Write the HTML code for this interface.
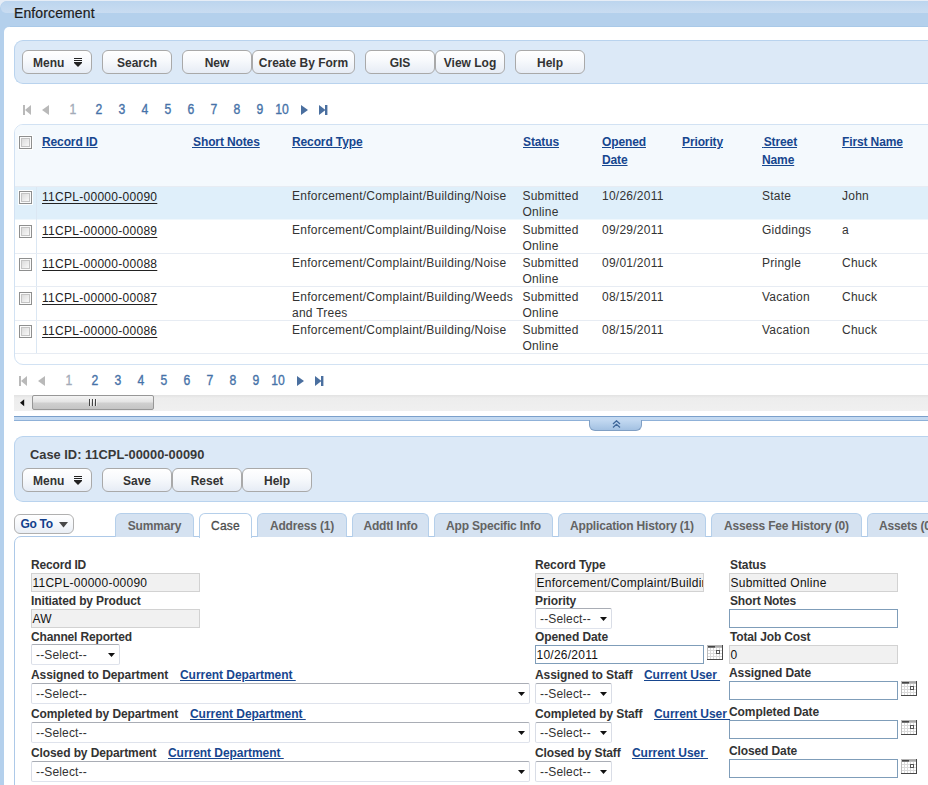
<!DOCTYPE html>
<html>
<head>
<meta charset="utf-8">
<title>Enforcement</title>
<style>
html,body{margin:0;padding:0;}
body{width:928px;height:785px;overflow:hidden;background:#fff;position:relative;font-family:"Liberation Sans",Arial,sans-serif;font-size:12px;color:#333;}
.abs{position:absolute;}
.t{position:absolute;white-space:nowrap;line-height:14px;}
#hdr{position:absolute;left:0;top:1px;width:940px;height:30px;background:linear-gradient(#b4d0ec 0,#b4d0ec 24.5px,#a9c9e8 25.5px,#a9c9e8 100%);border-top-left-radius:7px;overflow:hidden;}
#hdr .hi{position:absolute;left:1px;top:0;width:100%;height:11.5px;background:linear-gradient(#bcd5ee,#c9dcf1);border-radius:6px 0 0 5px;}
#side{position:absolute;left:0;top:20px;width:10px;height:770px;background:#b4d0ec;}
#main{position:absolute;left:4px;top:27px;width:940px;height:770px;background:#fff;border-top-left-radius:5px;}
.bar{position:absolute;background:#dce9f7;border:1px solid #b9d3ee;border-right:none;border-radius:9px 0 0 9px;box-sizing:border-box;}
.btn{position:absolute;box-sizing:border-box;height:24px;border:1px solid #a9a9a9;border-radius:6px;background:linear-gradient(#ffffff 0%,#f7f9fc 45%,#e6ecf5 100%);font-weight:bold;font-size:12px;color:#333;text-align:center;line-height:25px;white-space:nowrap;}
.pg{position:absolute;font-size:14px;color:#4672a8;line-height:14px;white-space:nowrap;transform:scaleX(0.87);-webkit-text-stroke:0.35px #4672a8;}
.pg.dis{color:#a3abb8;-webkit-text-stroke:0.35px #a3abb8;}
a,.lk{color:#17468f;text-decoration:underline;font-weight:bold;letter-spacing:-0.12px;}
.cb{position:absolute;width:13px;height:13px;box-sizing:border-box;border:1px solid #8e8f8f;background:#fbfbfb;box-shadow:0 0 0 1px rgba(255,255,255,0.9);}
.cb i{position:absolute;left:1px;top:1px;width:9px;height:9px;box-sizing:border-box;border:1px solid #c4c4c4;background:linear-gradient(135deg,#dcdcdc,#f8f8f8);}
.cell{position:absolute;font-size:12px;color:#333;line-height:16px;white-space:nowrap;letter-spacing:0.25px;}
.rid{text-underline-offset:2px;position:absolute;font-size:12px;color:#222;text-decoration:underline;line-height:16px;white-space:nowrap;letter-spacing:0.28px;}
.hl{position:absolute;height:1px;background:#e4ecf5;left:14px;width:920px;}
.lab{position:absolute;font-weight:bold;font-size:12px;color:#333;line-height:14px;white-space:nowrap;letter-spacing:-0.15px;}
.ro{position:absolute;box-sizing:border-box;height:19px;border:1px solid #d2d2d2;background:#f1f1f1;font-size:12px;color:#111;line-height:16px;padding:1px 0 0 0.5px;white-space:nowrap;overflow:hidden;letter-spacing:0.25px;}
.inp{position:absolute;box-sizing:border-box;height:19px;border:1px solid #7f9db9;background:#fff;font-size:12px;color:#111;line-height:16px;padding:1px 0 0 0.5px;white-space:nowrap;overflow:hidden;letter-spacing:0.25px;}
.sel{position:absolute;box-sizing:border-box;height:21px;border:1px solid;border-color:#a9adb5 #d9dde6 #dfe3ec #d9dde6;border-radius:2px;background:#fff;font-size:12px;color:#333;line-height:18px;padding:1px 0 0 4px;white-space:nowrap;letter-spacing:0.15px;}
.sel b{position:absolute;right:4px;top:8px;width:7px;height:4px;background:#111;clip-path:polygon(0 0,100% 0,50% 100%);}
.tab{position:absolute;top:513px;height:24px;box-sizing:border-box;border:1px solid #b5cfea;border-bottom:none;border-radius:6px 6px 0 0;background:#d5e2f1;font-weight:bold;font-size:12px;color:#636363;text-align:center;line-height:24px;white-space:nowrap;overflow:hidden;letter-spacing:-0.18px;}
.tab.on{background:#fff;color:#4c4c4c;font-weight:normal;-webkit-text-stroke:0.3px #4c4c4c;height:25px;letter-spacing:0.25px;}
.cal{position:absolute;width:16px;height:15px;}
</style>
</head>
<body>
<div class="abs" style="left:0;top:0;width:928px;height:8px;background:#e6edf6;"></div>
<div id="hdr"><div class="hi"></div></div>
<div id="side"></div>
<div id="main"></div>
<div class="t" style="left:14px;top:5px;font-size:14px;line-height:16px;color:#1c1c1c;-webkit-text-stroke:0.2px #1c1c1c;letter-spacing:0.12px;">Enforcement</div>

<!-- toolbar 1 -->
<div class="bar" style="left:14px;top:40px;width:920px;height:44px;"></div>
<div class="btn" style="left:22px;top:50px;width:70px;text-align:left;padding-left:10px;">Menu<svg style="position:absolute;left:50px;top:7px" width="10" height="9" viewBox="0 0 10 9"><path d="M1 0.5h8M1 2.5h8M1 4.5h8" stroke="#222" stroke-width="1"/><path d="M1 5h8L5 9z" fill="#222"/></svg></div>
<div class="btn" style="left:102px;top:50px;width:70px;">Search</div>
<div class="btn" style="left:182px;top:50px;width:70px;">New</div>
<div class="btn" style="left:252px;top:50px;width:103px;">Create By Form</div>
<div class="btn" style="left:365px;top:50px;width:70px;">GIS</div>
<div class="btn" style="left:435px;top:50px;width:70px;">View Log</div>
<div class="btn" style="left:515px;top:50px;width:70px;">Help</div>

<!-- pager 1 -->
<svg class="abs" style="left:23px;top:105px" width="9" height="10" viewBox="0 0 9 10"><rect x="0" y="0" width="2" height="10" fill="#b9b9b9"/><path d="M8 0v10L2 5z" fill="#b9b9b9"/></svg>
<svg class="abs" style="left:42px;top:105px" width="7" height="10" viewBox="0 0 7 10"><path d="M7 0v10L0 5z" fill="#b9b9b9"/></svg>
<div class="pg dis" style="left:58.3px;top:102px;width:30px;text-align:center;">1</div>
<div class="pg" style="left:83.6px;top:102px;width:30px;text-align:center;">2</div>
<div class="pg" style="left:106.8px;top:102px;width:30px;text-align:center;">3</div>
<div class="pg" style="left:129.9px;top:102px;width:30px;text-align:center;">4</div>
<div class="pg" style="left:153.0px;top:102px;width:30px;text-align:center;">5</div>
<div class="pg" style="left:176.0px;top:102px;width:30px;text-align:center;">6</div>
<div class="pg" style="left:199.0px;top:102px;width:30px;text-align:center;">7</div>
<div class="pg" style="left:221.5px;top:102px;width:30px;text-align:center;">8</div>
<div class="pg" style="left:244.5px;top:102px;width:30px;text-align:center;">9</div>
<div class="pg" style="left:267.2px;top:102px;width:30px;text-align:center;">10</div>
<svg class="abs" style="left:301px;top:105px" width="7" height="10" viewBox="0 0 7 10"><path d="M0 0v10L7 5z" fill="#4a6f9f"/></svg>
<svg class="abs" style="left:319px;top:105px" width="9" height="10" viewBox="0 0 9 10"><rect x="6" y="0" width="2.4" height="10" fill="#4a6f9f"/><path d="M0 0v10L6.5 5z" fill="#4a6f9f"/></svg>

<!-- table -->
<div class="abs" style="left:14px;top:124px;width:930px;height:241px;box-sizing:border-box;border:1px solid #d2e2f3;border-radius:9px 0 0 9px;background:#fff;overflow:hidden;">
<div class="abs" style="left:0;top:0;width:930px;height:61px;background:#f4f9fd;"></div>
<div class="abs" style="left:0;top:61px;width:930px;height:33px;background:#dfeffa;border-bottom:1px solid #eff7fc;"></div>
<div class="abs" style="left:21px;top:61px;width:1px;height:167px;background:#dbe7f3;"></div>
<div class="abs" style="left:0;top:61px;width:930px;height:1px;background:#e7ecf3;"></div>
<div class="abs" style="left:0;top:128px;width:930px;height:1px;background:#e7ecf3;"></div>
<div class="abs" style="left:0;top:161px;width:930px;height:1px;background:#e7ecf3;"></div>
<div class="abs" style="left:0;top:195px;width:930px;height:1px;background:#e7ecf3;"></div>
<div class="abs" style="left:0;top:228px;width:930px;height:1px;background:#e7ecf3;"></div>
</div>
<div class="abs lk" style="left:42px;top:133px;line-height:18px;white-space:nowrap;">Record ID</div>
<div class="abs lk" style="left:192px;top:133px;line-height:18px;white-space:nowrap;"><span style="white-space:pre;letter-spacing:-2.3px;"> </span>Short Notes</div>
<div class="abs lk" style="left:292px;top:133px;line-height:18px;white-space:nowrap;">Record Type</div>
<div class="abs lk" style="left:523px;top:133px;line-height:18px;white-space:nowrap;">Status</div>
<div class="abs lk" style="left:602px;top:133px;line-height:18px;white-space:nowrap;">Opened<br>Date</div>
<div class="abs lk" style="left:682px;top:133px;line-height:18px;white-space:nowrap;">Priority</div>
<div class="abs lk" style="left:762px;top:133px;line-height:18px;white-space:nowrap;"><span style="white-space:pre;letter-spacing:-1.6px;"> </span>Street<br>Name</div>
<div class="abs lk" style="left:842px;top:133px;line-height:18px;white-space:nowrap;">First Name</div>
<div class="cb" style="left:19px;top:136px;"><i></i></div>
<div class="cb" style="left:19px;top:191px;"><i></i></div>
<div class="rid" style="left:42px;top:189px;">11CPL-00000-00090</div>
<div class="cell" style="left:292px;top:188px;">Enforcement/Complaint/Building/Noise</div>
<div class="cell" style="left:522.4px;top:188px;">Submitted<br>Online</div>
<div class="cell" style="left:602px;top:188px;">10/26/2011</div>
<div class="cell" style="left:762px;top:188px;">State</div>
<div class="cell" style="left:842px;top:188px;">John</div>
<div class="cb" style="left:19px;top:225px;"><i></i></div>
<div class="rid" style="left:42px;top:223px;">11CPL-00000-00089</div>
<div class="cell" style="left:292px;top:222px;">Enforcement/Complaint/Building/Noise</div>
<div class="cell" style="left:522.4px;top:222px;">Submitted<br>Online</div>
<div class="cell" style="left:602px;top:222px;">09/29/2011</div>
<div class="cell" style="left:762px;top:222px;">Giddings</div>
<div class="cell" style="left:842px;top:222px;">a</div>
<div class="cb" style="left:19px;top:258px;"><i></i></div>
<div class="rid" style="left:42px;top:256px;">11CPL-00000-00088</div>
<div class="cell" style="left:292px;top:255px;">Enforcement/Complaint/Building/Noise</div>
<div class="cell" style="left:522.4px;top:255px;">Submitted<br>Online</div>
<div class="cell" style="left:602px;top:255px;">09/01/2011</div>
<div class="cell" style="left:762px;top:255px;">Pringle</div>
<div class="cell" style="left:842px;top:255px;">Chuck</div>
<div class="cb" style="left:19px;top:292px;"><i></i></div>
<div class="rid" style="left:42px;top:290px;">11CPL-00000-00087</div>
<div class="cell" style="left:292px;top:289px;">Enforcement/Complaint/Building/Weeds<br>and Trees</div>
<div class="cell" style="left:522.4px;top:289px;">Submitted<br>Online</div>
<div class="cell" style="left:602px;top:289px;">08/15/2011</div>
<div class="cell" style="left:762px;top:289px;">Vacation</div>
<div class="cell" style="left:842px;top:289px;">Chuck</div>
<div class="cb" style="left:19px;top:325px;"><i></i></div>
<div class="rid" style="left:42px;top:323px;">11CPL-00000-00086</div>
<div class="cell" style="left:292px;top:322px;">Enforcement/Complaint/Building/Noise</div>
<div class="cell" style="left:522.4px;top:322px;">Submitted<br>Online</div>
<div class="cell" style="left:602px;top:322px;">08/15/2011</div>
<div class="cell" style="left:762px;top:322px;">Vacation</div>
<div class="cell" style="left:842px;top:322px;">Chuck</div>

<!-- pager 2 -->
<svg class="abs" style="left:19px;top:376px" width="9" height="10" viewBox="0 0 9 10"><rect x="0" y="0" width="2" height="10" fill="#b9b9b9"/><path d="M8 0v10L2 5z" fill="#b9b9b9"/></svg>
<svg class="abs" style="left:38px;top:376px" width="7" height="10" viewBox="0 0 7 10"><path d="M7 0v10L0 5z" fill="#b9b9b9"/></svg>
<div class="pg dis" style="left:54.3px;top:373px;width:30px;text-align:center;">1</div>
<div class="pg" style="left:79.6px;top:373px;width:30px;text-align:center;">2</div>
<div class="pg" style="left:102.8px;top:373px;width:30px;text-align:center;">3</div>
<div class="pg" style="left:125.9px;top:373px;width:30px;text-align:center;">4</div>
<div class="pg" style="left:149.0px;top:373px;width:30px;text-align:center;">5</div>
<div class="pg" style="left:172.0px;top:373px;width:30px;text-align:center;">6</div>
<div class="pg" style="left:195.0px;top:373px;width:30px;text-align:center;">7</div>
<div class="pg" style="left:217.5px;top:373px;width:30px;text-align:center;">8</div>
<div class="pg" style="left:240.5px;top:373px;width:30px;text-align:center;">9</div>
<div class="pg" style="left:263.2px;top:373px;width:30px;text-align:center;">10</div>
<svg class="abs" style="left:297px;top:376px" width="7" height="10" viewBox="0 0 7 10"><path d="M0 0v10L7 5z" fill="#4a6f9f"/></svg>
<svg class="abs" style="left:315px;top:376px" width="9" height="10" viewBox="0 0 9 10"><rect x="6" y="0" width="2.4" height="10" fill="#4a6f9f"/><path d="M0 0v10L6.5 5z" fill="#4a6f9f"/></svg>

<!-- scrollbar -->
<div class="abs" style="left:14px;top:395px;width:920px;height:16px;background:linear-gradient(#e2e2e2 0,#ededed 3px,#f0f0f0 100%);"></div>
<svg class="abs" style="left:20px;top:399px" width="5" height="8" viewBox="0 0 5 8"><path d="M4.2 0.3v6.9L0 3.7z" fill="#111"/></svg>
<div class="abs" style="left:32px;top:395px;width:122px;height:15px;box-sizing:border-box;border:1px solid #979797;border-radius:2px;background:linear-gradient(#f4f4f4 0%,#e4e4e4 45%,#cfcfcf 55%,#c4c4c4 100%);"></div>
<div class="abs" style="left:89px;top:399px;width:1px;height:7px;background:#444;box-shadow:1px 0 0 rgba(255,255,255,.6);"></div>
<div class="abs" style="left:92px;top:399px;width:1px;height:7px;background:#444;box-shadow:1px 0 0 rgba(255,255,255,.6);"></div>
<div class="abs" style="left:95px;top:399px;width:1px;height:7px;background:#444;box-shadow:1px 0 0 rgba(255,255,255,.6);"></div>
<!-- divider -->
<div class="abs" style="left:14px;top:416px;width:920px;height:5px;box-sizing:border-box;background:#c3d9f1;border-top:1px solid #7ba0cb;border-bottom:1px solid #8fb1d8;"></div>
<div class="abs" style="left:589px;top:420px;width:53px;height:11px;box-sizing:border-box;border:1px solid #7f9fc4;border-top:none;border-radius:0 0 6px 6px;background:linear-gradient(#c3d9f1,#a3c1e2);"></div>
<svg class="abs" style="left:612px;top:420px" width="9" height="8" viewBox="0 0 9 8"><path d="M1 4L4.5 0.8L8 4M1 7.5L4.5 4.3L8 7.5" fill="none" stroke="#3f679a" stroke-width="1.3"/></svg>
<!-- case panel -->
<div class="bar" style="left:14px;top:436px;width:920px;height:66px;"></div>
<div class="t" style="left:30px;top:447px;font-size:13.5px;line-height:16px;color:#383838;font-weight:bold;transform:scaleX(0.952);transform-origin:0 0;">Case ID: 11CPL-00000-00090</div>
<div class="btn" style="left:22px;top:468px;width:70px;text-align:left;padding-left:10px;">Menu<svg style="position:absolute;left:50px;top:7px" width="10" height="9" viewBox="0 0 10 9"><path d="M1 0.5h8M1 2.5h8M1 4.5h8" stroke="#222" stroke-width="1"/><path d="M1 5h8L5 9z" fill="#222"/></svg></div>
<div class="btn" style="left:102px;top:468px;width:70px;">Save</div>
<div class="btn" style="left:172px;top:468px;width:70px;">Reset</div>
<div class="btn" style="left:242px;top:468px;width:70px;">Help</div>
<!-- go to + tabs -->
<div class="abs" style="left:14px;top:514px;width:60px;height:20px;box-sizing:border-box;border:1px solid #b0b0b0;border-radius:6px;background:linear-gradient(#fff 0%,#f6f8fb 50%,#e9eef5 100%);font-weight:bold;font-size:12px;color:#123f8c;line-height:18px;padding-left:5.5px;white-space:nowrap;letter-spacing:-0.3px;">Go To<svg style="position:absolute;left:43.5px;top:7px" width="9" height="6" viewBox="0 0 9 6"><path d="M0 0h9L4.5 5.6z" fill="#484848"/></svg></div>
<div class="abs" style="left:14px;top:536px;width:930px;height:260px;box-sizing:border-box;border:1px solid #adc9e8;border-radius:7px 0 0 0;background:#fff;"></div>
<div class="tab" style="left:115px;width:79px;">Summary</div>
<div class="tab on" style="left:199px;width:53px;">Case</div>
<div class="tab" style="left:257px;width:90px;">Address (1)</div>
<div class="tab" style="left:352px;width:77px;">Addtl Info</div>
<div class="tab" style="left:434px;width:119px;">App Specific Info</div>
<div class="tab" style="left:558px;width:148px;">Application History (1)</div>
<div class="tab" style="left:711px;width:151px;">Assess Fee History (0)</div>
<div class="tab" style="left:867px;width:93px;text-align:left;padding-left:11px;">Assets (0)</div>
<!-- form -->
<div class="lab" style="left:31px;top:558px;letter-spacing:-0.175px;">Record ID</div>
<div class="ro" style="left:31px;top:573px;width:169px;">11CPL-00000-00090</div>
<div class="lab" style="left:31px;top:594px;letter-spacing:-0.120px;">Initiated by Product</div>
<div class="ro" style="left:31px;top:609px;width:169px;">AW</div>
<div class="lab" style="left:31px;top:630px;letter-spacing:-0.156px;">Channel Reported</div>
<div class="sel" style="left:31px;top:644px;width:89px;">--Select--<b></b></div>
<div class="lab" style="left:31px;top:668px;letter-spacing:-0.072px;">Assigned to Department</div>
<div class="lab lk" style="left:180px;top:668px;color:#17468f;white-space:pre;letter-spacing:-0.05px;">Current Department </div>
<div class="sel" style="left:31px;top:683px;width:499px;">--Select--<b></b></div>
<div class="lab" style="left:31px;top:707px;letter-spacing:-0.098px;">Completed by Department</div>
<div class="lab lk" style="left:190px;top:707px;color:#17468f;white-space:pre;letter-spacing:-0.05px;">Current Department </div>
<div class="sel" style="left:31px;top:722px;width:499px;">--Select--<b></b></div>
<div class="lab" style="left:31px;top:746px;letter-spacing:-0.100px;">Closed by Department</div>
<div class="lab lk" style="left:168px;top:746px;color:#17468f;white-space:pre;letter-spacing:-0.05px;">Current Department </div>
<div class="sel" style="left:31px;top:761px;width:499px;">--Select--<b></b></div>
<div class="lab" style="left:535px;top:558px;letter-spacing:-0.109px;">Record Type</div>
<div class="ro" style="left:535px;top:573px;width:169px;">Enforcement/Complaint/Building/Noise</div>
<div class="lab" style="left:535px;top:594px;letter-spacing:-0.114px;">Priority</div>
<div class="sel" style="left:535px;top:608px;width:77px;">--Select--<b></b></div>
<div class="lab" style="left:535px;top:630px;letter-spacing:-0.083px;">Opened Date</div>
<div class="inp" style="left:535px;top:645px;width:169px;">10/26/2011</div>
<svg class="cal" style="left:707px;top:645px" width="16" height="15" viewBox="0 0 16 15" shape-rendering="crispEdges"><rect x="0" y="0" width="16" height="15" fill="#dadada"/><rect x="1" y="3" width="2" height="2" fill="#fff"/><rect x="1" y="6" width="2" height="2" fill="#fff"/><rect x="1" y="9" width="2" height="2" fill="#fff"/><rect x="1" y="12" width="2" height="2" fill="#fff"/><rect x="4" y="3" width="2" height="2" fill="#fff"/><rect x="4" y="6" width="2" height="2" fill="#fff"/><rect x="4" y="9" width="2" height="2" fill="#fff"/><rect x="4" y="12" width="2" height="2" fill="#fff"/><rect x="7" y="3" width="2" height="2" fill="#fff"/><rect x="7" y="6" width="2" height="2" fill="#fff"/><rect x="7" y="9" width="2" height="2" fill="#fff"/><rect x="7" y="12" width="2" height="2" fill="#fff"/><rect x="10" y="3" width="2" height="2" fill="#fff"/><rect x="10" y="6" width="2" height="2" fill="#fff"/><rect x="10" y="9" width="2" height="2" fill="#fff"/><rect x="10" y="12" width="2" height="2" fill="#fff"/><rect x="13" y="3" width="2" height="2" fill="#fff"/><rect x="13" y="6" width="2" height="2" fill="#fff"/><rect x="13" y="9" width="2" height="2" fill="#fff"/><rect x="13" y="12" width="2" height="2" fill="#fff"/><rect x="0" y="0" width="16" height="1" fill="#b4b4b4"/><rect x="0" y="1" width="1" height="13" fill="#bcbcbc"/><rect x="1" y="1" width="7" height="1" fill="#454545"/><rect x="8" y="1" width="7" height="1" fill="#a8a8a8"/><rect x="1" y="2" width="7" height="1" fill="#777"/><rect x="8" y="2" width="7" height="1" fill="#c0c0c0"/><rect x="15" y="0" width="1" height="15" fill="#484848"/><rect x="0" y="14" width="16" height="1" fill="#484848"/><rect x="9" y="5" width="4" height="4" fill="#555"/><rect x="10" y="6" width="2" height="2" fill="#fff"/></svg>
<div class="lab" style="left:535px;top:668px;letter-spacing:-0.078px;">Assigned to Staff</div>
<div class="lab lk" style="left:644px;top:668px;color:#17468f;white-space:pre;letter-spacing:-0.05px;">Current User </div>
<div class="sel" style="left:535px;top:683px;width:77px;">--Select--<b></b></div>
<div class="lab" style="left:535px;top:707px;letter-spacing:-0.111px;">Completed by Staff</div>
<div class="lab lk" style="left:654px;top:707px;color:#17468f;white-space:pre;letter-spacing:-0.05px;">Current User </div>
<div class="sel" style="left:535px;top:722px;width:77px;">--Select--<b></b></div>
<div class="lab" style="left:535px;top:746px;letter-spacing:-0.116px;">Closed by Staff</div>
<div class="lab lk" style="left:632px;top:746px;color:#17468f;white-space:pre;letter-spacing:-0.05px;">Current User </div>
<div class="sel" style="left:535px;top:761px;width:77px;">--Select--<b></b></div>
<div class="lab" style="left:730px;top:558px;letter-spacing:-0.096px;">Status</div>
<div class="ro" style="left:729px;top:573px;width:169px;">Submitted Online</div>
<div class="lab" style="left:730px;top:594px;letter-spacing:-0.173px;">Short Notes</div>
<div class="inp" style="left:729px;top:609px;width:169px;"></div>
<div class="lab" style="left:730px;top:630px;letter-spacing:-0.149px;">Total Job Cost</div>
<div class="ro" style="left:729px;top:645px;width:169px;">0</div>
<div class="lab" style="left:729px;top:666px;letter-spacing:-0.097px;">Assigned Date</div>
<div class="inp" style="left:729px;top:681px;width:169px;"></div>
<svg class="cal" style="left:901px;top:681px" width="16" height="15" viewBox="0 0 16 15" shape-rendering="crispEdges"><rect x="0" y="0" width="16" height="15" fill="#dadada"/><rect x="1" y="3" width="2" height="2" fill="#fff"/><rect x="1" y="6" width="2" height="2" fill="#fff"/><rect x="1" y="9" width="2" height="2" fill="#fff"/><rect x="1" y="12" width="2" height="2" fill="#fff"/><rect x="4" y="3" width="2" height="2" fill="#fff"/><rect x="4" y="6" width="2" height="2" fill="#fff"/><rect x="4" y="9" width="2" height="2" fill="#fff"/><rect x="4" y="12" width="2" height="2" fill="#fff"/><rect x="7" y="3" width="2" height="2" fill="#fff"/><rect x="7" y="6" width="2" height="2" fill="#fff"/><rect x="7" y="9" width="2" height="2" fill="#fff"/><rect x="7" y="12" width="2" height="2" fill="#fff"/><rect x="10" y="3" width="2" height="2" fill="#fff"/><rect x="10" y="6" width="2" height="2" fill="#fff"/><rect x="10" y="9" width="2" height="2" fill="#fff"/><rect x="10" y="12" width="2" height="2" fill="#fff"/><rect x="13" y="3" width="2" height="2" fill="#fff"/><rect x="13" y="6" width="2" height="2" fill="#fff"/><rect x="13" y="9" width="2" height="2" fill="#fff"/><rect x="13" y="12" width="2" height="2" fill="#fff"/><rect x="0" y="0" width="16" height="1" fill="#b4b4b4"/><rect x="0" y="1" width="1" height="13" fill="#bcbcbc"/><rect x="1" y="1" width="7" height="1" fill="#454545"/><rect x="8" y="1" width="7" height="1" fill="#a8a8a8"/><rect x="1" y="2" width="7" height="1" fill="#777"/><rect x="8" y="2" width="7" height="1" fill="#c0c0c0"/><rect x="15" y="0" width="1" height="15" fill="#484848"/><rect x="0" y="14" width="16" height="1" fill="#484848"/><rect x="9" y="5" width="4" height="4" fill="#555"/><rect x="10" y="6" width="2" height="2" fill="#fff"/></svg>
<div class="lab" style="left:729px;top:705px;letter-spacing:-0.089px;">Completed Date</div>
<div class="inp" style="left:729px;top:720px;width:169px;"></div>
<svg class="cal" style="left:901px;top:720px" width="16" height="15" viewBox="0 0 16 15" shape-rendering="crispEdges"><rect x="0" y="0" width="16" height="15" fill="#dadada"/><rect x="1" y="3" width="2" height="2" fill="#fff"/><rect x="1" y="6" width="2" height="2" fill="#fff"/><rect x="1" y="9" width="2" height="2" fill="#fff"/><rect x="1" y="12" width="2" height="2" fill="#fff"/><rect x="4" y="3" width="2" height="2" fill="#fff"/><rect x="4" y="6" width="2" height="2" fill="#fff"/><rect x="4" y="9" width="2" height="2" fill="#fff"/><rect x="4" y="12" width="2" height="2" fill="#fff"/><rect x="7" y="3" width="2" height="2" fill="#fff"/><rect x="7" y="6" width="2" height="2" fill="#fff"/><rect x="7" y="9" width="2" height="2" fill="#fff"/><rect x="7" y="12" width="2" height="2" fill="#fff"/><rect x="10" y="3" width="2" height="2" fill="#fff"/><rect x="10" y="6" width="2" height="2" fill="#fff"/><rect x="10" y="9" width="2" height="2" fill="#fff"/><rect x="10" y="12" width="2" height="2" fill="#fff"/><rect x="13" y="3" width="2" height="2" fill="#fff"/><rect x="13" y="6" width="2" height="2" fill="#fff"/><rect x="13" y="9" width="2" height="2" fill="#fff"/><rect x="13" y="12" width="2" height="2" fill="#fff"/><rect x="0" y="0" width="16" height="1" fill="#b4b4b4"/><rect x="0" y="1" width="1" height="13" fill="#bcbcbc"/><rect x="1" y="1" width="7" height="1" fill="#454545"/><rect x="8" y="1" width="7" height="1" fill="#a8a8a8"/><rect x="1" y="2" width="7" height="1" fill="#777"/><rect x="8" y="2" width="7" height="1" fill="#c0c0c0"/><rect x="15" y="0" width="1" height="15" fill="#484848"/><rect x="0" y="14" width="16" height="1" fill="#484848"/><rect x="9" y="5" width="4" height="4" fill="#555"/><rect x="10" y="6" width="2" height="2" fill="#fff"/></svg>
<div class="lab" style="left:729px;top:744px;letter-spacing:-0.114px;">Closed Date</div>
<div class="inp" style="left:729px;top:759px;width:169px;"></div>
<svg class="cal" style="left:901px;top:759px" width="16" height="15" viewBox="0 0 16 15" shape-rendering="crispEdges"><rect x="0" y="0" width="16" height="15" fill="#dadada"/><rect x="1" y="3" width="2" height="2" fill="#fff"/><rect x="1" y="6" width="2" height="2" fill="#fff"/><rect x="1" y="9" width="2" height="2" fill="#fff"/><rect x="1" y="12" width="2" height="2" fill="#fff"/><rect x="4" y="3" width="2" height="2" fill="#fff"/><rect x="4" y="6" width="2" height="2" fill="#fff"/><rect x="4" y="9" width="2" height="2" fill="#fff"/><rect x="4" y="12" width="2" height="2" fill="#fff"/><rect x="7" y="3" width="2" height="2" fill="#fff"/><rect x="7" y="6" width="2" height="2" fill="#fff"/><rect x="7" y="9" width="2" height="2" fill="#fff"/><rect x="7" y="12" width="2" height="2" fill="#fff"/><rect x="10" y="3" width="2" height="2" fill="#fff"/><rect x="10" y="6" width="2" height="2" fill="#fff"/><rect x="10" y="9" width="2" height="2" fill="#fff"/><rect x="10" y="12" width="2" height="2" fill="#fff"/><rect x="13" y="3" width="2" height="2" fill="#fff"/><rect x="13" y="6" width="2" height="2" fill="#fff"/><rect x="13" y="9" width="2" height="2" fill="#fff"/><rect x="13" y="12" width="2" height="2" fill="#fff"/><rect x="0" y="0" width="16" height="1" fill="#b4b4b4"/><rect x="0" y="1" width="1" height="13" fill="#bcbcbc"/><rect x="1" y="1" width="7" height="1" fill="#454545"/><rect x="8" y="1" width="7" height="1" fill="#a8a8a8"/><rect x="1" y="2" width="7" height="1" fill="#777"/><rect x="8" y="2" width="7" height="1" fill="#c0c0c0"/><rect x="15" y="0" width="1" height="15" fill="#484848"/><rect x="0" y="14" width="16" height="1" fill="#484848"/><rect x="9" y="5" width="4" height="4" fill="#555"/><rect x="10" y="6" width="2" height="2" fill="#fff"/></svg>
</body>
</html>
